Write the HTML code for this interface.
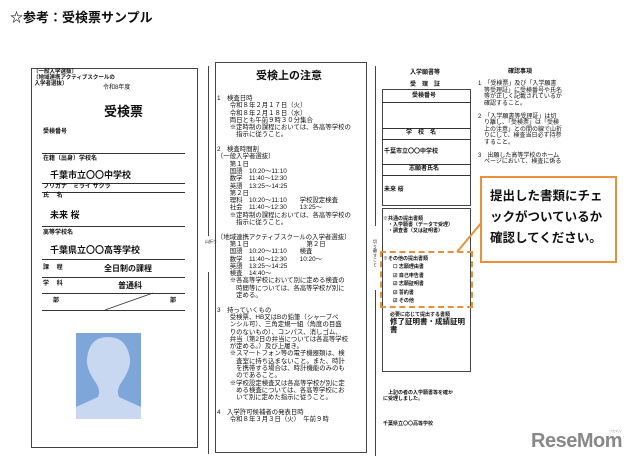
<!DOCTYPE html><html><head><meta charset="utf-8"><style>
*{margin:0;padding:0;box-sizing:border-box}
body{width:640px;height:466px;background:#fff;position:relative;overflow:hidden;font-family:"Liberation Sans","Noto Sans CJK JP",sans-serif;color:#111}
.a{position:absolute;white-space:nowrap}
.s{font-size:6px;line-height:7.3px}
.b{font-weight:bold}
.hl{position:absolute;height:1px;background:#333}
.box{position:absolute;border:1px solid #444}
</style></head><body>
<div class="a b" style="left:10px;top:7px;font-size:13px;">☆参考：受検票サンプル</div>

<!-- left ticket -->
<div class="box" style="left:31px;top:68px;width:167px;height:380px"></div>
<div class="a s b" style="left:33px;top:69px;font-size:5.5px;line-height:6px">〔一般入学選抜〕<br>〔地域連携アクティブスクールの<br>&nbsp;入学者選抜〕</div>
<div class="a s" style="left:103px;top:85px">令和8年度</div>
<div class="a b" style="left:104px;top:101px;font-size:13px">受検票</div>
<div class="a s b" style="left:43px;top:129px">受検番号</div>
<div class="hl" style="left:42px;top:153px;width:143px"></div>
<div class="a s b" style="left:43px;top:156px">在籍（出身）学校名</div>
<div class="a b" style="left:50px;top:168px;font-size:9px">千葉市立〇〇中学校</div>
<div class="hl" style="left:42px;top:183px;width:143px"></div>
<div class="a s b" style="left:43px;top:184px">フリガナ　ミライ サクラ</div>
<div class="hl" style="left:42px;top:192px;width:143px"></div>
<div class="a s b" style="left:43px;top:193px">氏　 名</div>
<div class="a b" style="left:50px;top:208px;font-size:9px">未来 桜</div>
<div class="hl" style="left:42px;top:226px;width:143px"></div>
<div class="a s b" style="left:43px;top:230px">高等学校名</div>
<div class="a b" style="left:50px;top:243px;font-size:9px">千葉県立〇〇高等学校</div>
<div class="hl" style="left:42px;top:259px;width:143px"></div>
<div class="a s b" style="left:43px;top:265px">課　 程</div>
<div class="a b" style="left:104px;top:263px;font-size:8px">全日制の課程</div>
<div class="hl" style="left:42px;top:277px;width:143px"></div>
<div class="a s b" style="left:43px;top:281px">学　 科</div>
<div class="a b" style="left:118px;top:280px;font-size:8px">普通科</div>
<div class="hl" style="left:42px;top:293px;width:143px"></div>
<div class="a s b" style="left:53px;top:298px">部</div>
<div class="a s b" style="left:170px;top:298px">部</div>
<div class="hl" style="left:42px;top:310px;width:143px"></div>
<svg class="a" style="left:0;top:0" width="640" height="466"><line x1="105" y1="310" x2="153" y2="293" stroke="#333" stroke-width="0.8"/></svg>
<svg class="a" style="left:76px;top:333px" width="65" height="86"><rect width="65" height="86" fill="#7fa6d9"/><path d="M0 74 L22 64 Q25 58 20 50 Q10 36 11 26 Q13 4 32 4 Q51 4 54 26 Q55 36 45 50 Q40 58 43 64 L65 74 L65 86 L0 86Z" fill="#c8d8f0"/></svg>

<!-- fold lines -->
<div class="a" style="left:208px;top:66px;width:1px;height:170px;background:#444"></div>
<div class="a" style="left:208px;top:272px;width:1px;height:182px;background:#444"></div>
<div class="a s" style="left:205px;top:240px;font-size:4px;line-height:4px;width:6px">山折り</div>
<div class="a" style="left:375px;top:66px;width:1px;height:160px;background:#444"></div>
<div class="a" style="left:375px;top:290px;width:1px;height:166px;background:#444"></div>
<div class="a s" style="left:373px;top:240px;font-size:4px;line-height:4.5px;width:6px;white-space:normal">切り離すこと</div>

<!-- middle -->
<div class="box" style="left:215px;top:62px;width:152px;height:391px"></div>
<div class="a b" style="left:256px;top:67px;font-size:11px">受検上の注意</div>
<div class="a s" style="left:217px;top:95px;font-size:6.4px;line-height:7.3px">1　検査日時<br>　　令和８年２月１７日（火）<br>　　令和８年２月１８日（水）<br>　　両日とも午前９時３０分集合<br>　　※定時制の課程においては、各高等学校の<br>　　　指示に従うこと。<br><br>2　検査時間割<br>〔一般入学者選抜〕<br>　　第１日<br>　　国語　10:20～11:10<br>　　数学　11:40～12:30<br>　　英語　13:25～14:25<br>　　第２日<br>　　理科　10:20～11:10　　学校設定検査<br>　　社会　11:40～12:30　　13:25～<br>　　※定時制の課程においては、各高等学校の<br>　　　指示に従うこと。<br><br>〔地域連携アクティブスクールの入学者選抜〕<br>　　第１日　　　　　　　　　第２日<br>　　国語　10:20～11:10　　検査<br>　　数学　11:40～12:30　　10:20～<br>　　英語　13:25～14:25<br>　　検査　14:40～<br>　　※各高等学校において別に定める検査の<br>　　　時間等については、各高等学校が別に<br>　　　定める。<br><br>3　持っていくもの<br>　　受検票、HB又はBの鉛筆（シャープペ<br>　　ンシル可）、三角定規一組（角度の目盛<br>　　りのないもの）、コンパス、消しゴム、<br>　　弁当（第2日の弁当については各高等学校<br>　　が定める。）及び上履き。<br>　　※スマートフォン等の電子機器類は、検<br>　　　査室に持ち込まないこと。また、時計<br>　　　を携帯する場合は、時計機能のみのも<br>　　　のであること。<br>　　※学校設定検査又は各高等学校が別に定<br>　　　める検査については、各高等学校にお<br>　　　いて別に定めた指示に従うこと。<br><br>4　入学許可候補者の発表日時<br>　　令和８年３月３日（火）　午前９時</div>

<!-- right receipt -->
<div class="a s b" style="left:410px;top:70px">入学願書等</div>
<div class="a s b" style="left:410px;top:82px">受　理　証</div>
<div class="box" style="left:382px;top:89px;width:89px;height:117px;border-color:#444"></div>
<div class="hl" style="left:382px;top:102px;width:89px"></div>
<div class="hl" style="left:382px;top:128px;width:89px"></div>
<div class="hl" style="left:382px;top:139px;width:89px"></div>
<div class="hl" style="left:382px;top:164px;width:89px"></div>
<div class="hl" style="left:382px;top:175px;width:89px"></div>
<div class="a s b" style="left:412px;top:93px">受検番号</div>
<div class="a s b" style="left:406px;top:130px">学　校　名</div>
<div class="a s b" style="left:384px;top:149px">千葉市立〇〇中学校</div>
<div class="a s b" style="left:409px;top:166px">志願者氏名</div>
<div class="a s b" style="left:384px;top:187px">未来 桜</div>
<div class="box" style="left:382px;top:208px;width:89px;height:164px"></div>
<div class="a s b" style="left:383px;top:216px;font-size:5px;line-height:6px">※共通の提出書類<br>　・入学願書（データで受理）<br>　・調査書（又は証明書）</div>
<div class="a" style="left:380px;top:251px;width:93px;height:57px;border:2px dashed #e8903a"></div>
<div class="a s b" style="left:383px;top:255px;font-size:5px;line-height:8.4px">※その他の提出書類<br>　　☐ 志願理由書<br>　　☑ 自己申告書<br>　　☑ 志願証明書<br>　　☑ 誓約書<br>　　☑ その他</div>
<div class="a s b" style="left:390px;top:312px;font-size:5px">必要に応じて提出する書類</div>
<div class="a b" style="left:390px;top:318px;font-size:7.5px;line-height:8px">修了証明書・成績証明<br>書</div>
<div class="a s b" style="left:383px;top:390px;font-size:5px;line-height:6px">　上記の者の入学願書等を確か<br>に受理しました。</div>
<div class="a s b" style="left:383px;top:421px;font-size:5px">千葉県立〇〇高等学校</div>

<div class="a s b" style="left:508px;top:69px">確認事項</div>
<div class="a s" style="left:478px;top:81px;line-height:6.5px">1　「受検票」及び「入学願書<br>　等受理証」に受検番号や氏名<br>　等が正しく記載されているか<br>　確認すること。<br><br>2　「入学願書等受理証」は切<br>　り離し、「受検票」は「受検<br>　上の注意」との間の線で山折<br>　りにして、検査当日必ず持参<br>　すること。<br><br>3　出願した高等学校のホーム<br>　ページにおいて、検査に係る</div>

<svg class="a" style="left:0;top:0" width="640" height="466"><line x1="457" y1="252" x2="482" y2="222" stroke="#e8903a" stroke-width="2"/></svg>
<div class="a" style="left:480px;top:176px;width:137px;height:87px;border:2px solid #e8903a;background:#fff"></div>
<div class="a b" style="left:490px;top:186px;font-size:12.5px;line-height:21px">提出した書類にチェ<br>ックがついているか<br>確認してください。</div>

<div class="a b" style="left:531px;top:430px;font-size:20px;color:#888;letter-spacing:-0.5px;font-family:'Liberation Sans',sans-serif">ReseMom</div>
<div class="a" style="left:609px;top:429px;font-size:3px;color:#888">リセマム</div>
</body></html>
